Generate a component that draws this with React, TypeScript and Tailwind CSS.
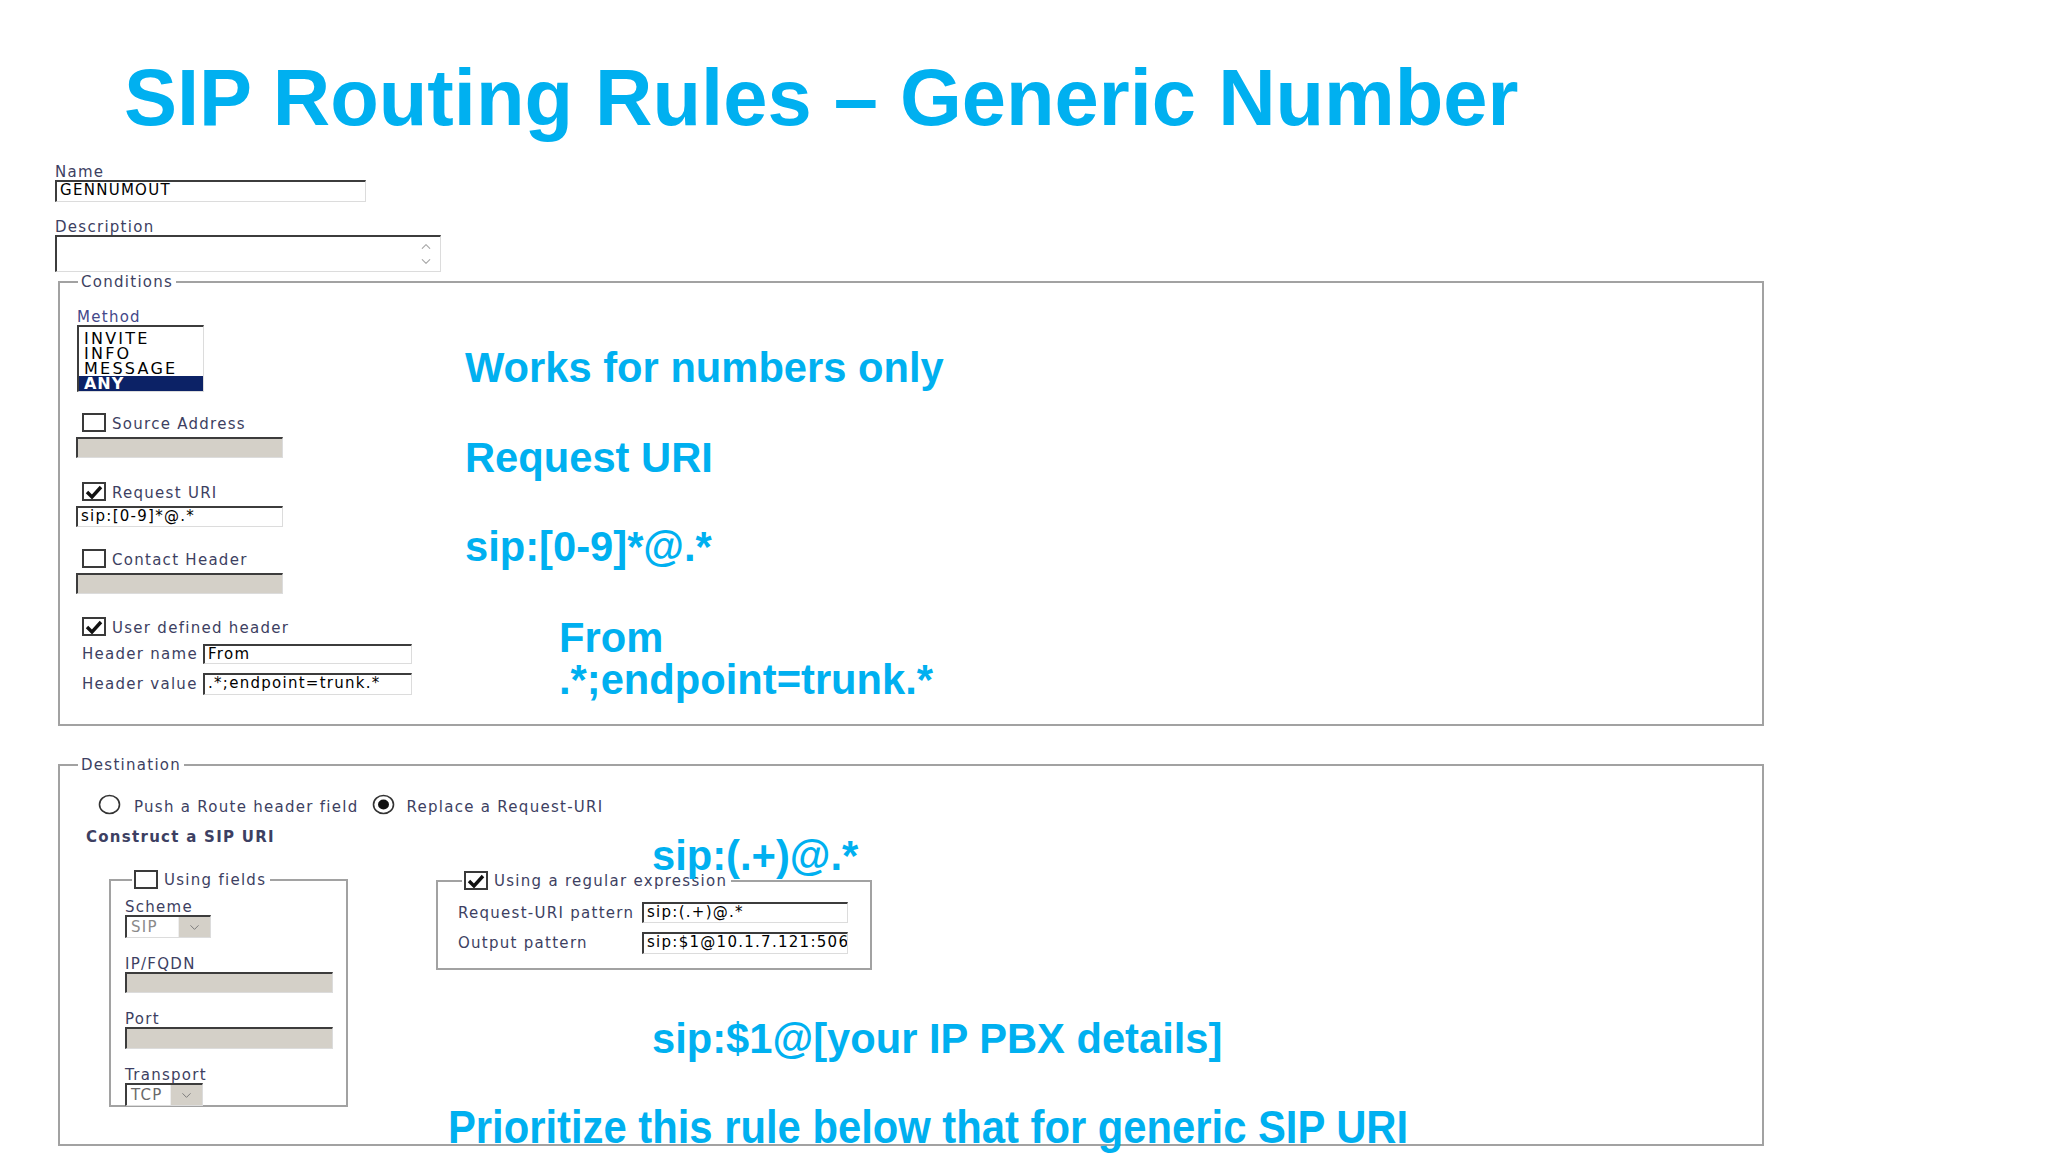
import { ChevronDown, ChevronUp } from "lucide-react";

const inset =
  "border-t-2 border-l-2 border-b border-r border-t-[#3c3c3c] border-l-[#3c3c3c] border-b-[#dcdcdc] border-r-[#dcdcdc]";

const label = "text-[15px] leading-[16px] tracking-[0.085em] text-[#3d3f62]";

function Field({
  className = "",
  value,
  disabled,
}: {
  className?: string;
  value?: string;
  disabled?: boolean;
}) {
  return (
    <div
      className={`${inset} ${
        disabled ? "bg-[#d4d0c8]" : "bg-white"
      } ${className} overflow-hidden whitespace-nowrap pl-[3px] text-[15px] leading-[17px] tracking-[0.085em] text-black`}
    >
      {value}
    </div>
  );
}

function Check({ checked }: { checked?: boolean }) {
  return (
    <span className="w-[24px] h-[19px] border-2 border-[#3a3a3a] bg-white flex items-center justify-center shrink-0">
      {checked && (
        <svg width="18" height="14" viewBox="0 0 18 14">
          <path
            d="M2 7 L7 12 L16 2"
            fill="none"
            stroke="#111"
            strokeWidth="3.4"
            strokeLinejoin="miter"
          />
        </svg>
      )}
    </span>
  );
}

function Radio({ on }: { on?: boolean }) {
  return (
    <svg width="23" height="21" viewBox="0 0 23 21" className="shrink-0">
      <ellipse cx="11.5" cy="10.5" rx="10" ry="9" fill="#fff" stroke="#333" strokeWidth="1.6" />
      {on && <ellipse cx="11.5" cy="10.5" rx="5.5" ry="5" fill="#111" />}
    </svg>
  );
}

function Select({ className, value, dim }: { className: string; value: string; dim?: boolean }) {
  return (
    <div className={`${inset} ${className} flex bg-white`}>
      <span
        className={`flex-1 pl-[4px] text-[15px] leading-[20px] tracking-[0.085em] ${
          dim ? "text-[#8a8a8a]" : "text-[#6a6a6a]"
        }`}
      >
        {value}
      </span>
      <span className="w-[32px] bg-[#d4d0c8] border-l border-[#eeeeee] flex items-center justify-center">
        <ChevronDown className="w-[15px] h-[15px] text-[#7c7c7c]" strokeWidth={1.6} />
      </span>
    </div>
  );
}

const callout =
  "absolute font-['Liberation_Sans',Arial,sans-serif] font-bold text-[41.7px] leading-none text-[#00b0f0] whitespace-nowrap";

export default function App() {
  return (
    <div className="relative w-[2048px] h-[1153px] bg-white overflow-hidden font-['DejaVu_Sans',Verdana,sans-serif]">
      <h1 className="pl-[124px] pt-[58px] font-['Liberation_Sans',Arial,sans-serif] font-bold text-[79.5px] leading-[80px] text-[#00b0f0] whitespace-nowrap">
        SIP Routing Rules – Generic Number
      </h1>

      <div className="pl-[55px] pt-[26px]">
        <div className={label}>Name</div>
        <Field className="w-[311px] h-[22px]" value="GENNUMOUT" />

        <div className={`${label} mt-[17px]`}>Description</div>
        <div className={`${inset} bg-white w-[386px] h-[37px] flex justify-end pr-[5px]`}>
          <div className="flex flex-col items-center justify-center text-[#a8a8a8]">
            <ChevronUp className="w-[18px] h-[15px]" strokeWidth={1.8} />
            <ChevronDown className="w-[18px] h-[15px]" strokeWidth={1.8} />
          </div>
        </div>

        {/* Conditions */}
        <fieldset className="ml-[3px] mt-[2px] w-[1706px] h-[452px] border-2 border-[#a2a2a2]">
          <legend className={`${label} ml-[18px] px-[3px]`}>Conditions</legend>
          <div className="pl-[17px] pt-[19px]">
            <div className={`${label} text-[#44488a]`}>Method</div>
            <div className={`${inset} w-[127px] h-[67px] bg-white pt-[4px] text-[16px] leading-[15px] text-black tracking-[0.14em]`}>
              <div className="pl-[5px]">INVITE</div>
              <div className="pl-[5px]">INFO</div>
              <div className="pl-[5px]">MESSAGE</div>
              <div className="pl-[5px] bg-[#0c2266] text-white font-bold tracking-[0.06em]">ANY</div>
            </div>

            <div className="mt-[21px] ml-[5px] flex items-end gap-[6px]">
              <Check />
              <span className={label}>Source Address</span>
            </div>
            <Field className="-ml-[1px] mt-[5px] w-[207px] h-[21px]" disabled />

            <div className="mt-[24px] ml-[5px] flex items-end gap-[6px]">
              <Check checked />
              <span className={label}>Request URI</span>
            </div>
            <Field className="-ml-[1px] mt-[5px] w-[207px] h-[21px]" value="sip:[0-9]*@.*" />

            <div className="mt-[22px] ml-[5px] flex items-end gap-[6px]">
              <Check />
              <span className={label}>Contact Header</span>
            </div>
            <Field className="-ml-[1px] mt-[5px] w-[207px] h-[21px]" disabled />

            <div className="mt-[23px] ml-[5px] flex items-end gap-[6px]">
              <Check checked />
              <span className={label}>User defined header</span>
            </div>
            <div className="mt-[8px] ml-[5px] flex items-center">
              <span className={`${label} w-[121px]`}>Header name</span>
              <Field className="w-[209px] h-[20px]" value="From" />
            </div>
            <div className="mt-[9px] ml-[5px] flex items-center">
              <span className={`${label} w-[121px]`}>Header value</span>
              <Field className="w-[209px] h-[22px]" value=".*;endpoint=trunk.*" />
            </div>
          </div>
        </fieldset>

        {/* Destination */}
        <fieldset className="ml-[3px] mt-[31px] w-[1706px] h-[389px] border-2 border-[#a2a2a2]">
          <legend className={`${label} ml-[18px] px-[3px]`}>Destination</legend>
          <div className="pl-[38px] pt-[21px] flex items-center">
            <Radio />
            <span className={`${label} ml-[13px] mt-[4px] tracking-[0.075em]`}>Push a Route header field</span>
            <span className="ml-[13px]">
              <Radio on />
            </span>
            <span className={`${label} ml-[12px] mt-[4px] tracking-[0.075em]`}>Replace a Request-URI</span>
          </div>
          <div className={`${label} pl-[26px] mt-[14px] font-bold text-[#2c2c4c] tracking-[0.05em]`}>
            Construct a SIP URI
          </div>

          <div className="mt-[25px] pl-[49px] flex items-start">
            <fieldset className="w-[239px] h-[237px] border-2 border-[#a2a2a2]">
              <legend className="ml-[21px] pl-[2px] pr-[4px] flex items-center gap-[6px]">
                <Check />
                <span className={label}>Using fields</span>
              </legend>
              <div className="pl-[14px] pt-[10px]">
                <div className={`${label} text-[#3a3c80]`}>Scheme</div>
                <Select className="w-[86px] h-[23px]" value="SIP" dim />
                <div className={`${label} text-[#3a3c80] mt-[18px]`}>IP/FQDN</div>
                <Field className="w-[208px] h-[21px]" disabled />
                <div className={`${label} text-[#3a3c80] mt-[18px]`}>Port</div>
                <Field className="w-[208px] h-[22px]" disabled />
                <div className={`${label} text-[#3a3c80] mt-[18px]`}>Transport</div>
                <Select className="w-[78px] h-[23px]" value="TCP" />
              </div>
            </fieldset>

            <fieldset className="ml-[88px] mt-[1px] w-[436px] h-[99px] border-2 border-[#a2a2a2]">
              <legend className="ml-[24px] pl-[2px] pr-[4px] flex items-center gap-[6px]">
                <Check checked />
                <span className={label}>Using a regular expression</span>
              </legend>
              <div className="pl-[20px] pt-[12px]">
                <div className="flex items-center">
                  <span className={`${label} w-[184px]`}>Request-URI pattern</span>
                  <Field className="w-[206px] h-[21px]" value="sip:(.+)@.*" />
                </div>
                <div className="mt-[9px] flex items-center">
                  <span className={`${label} w-[184px]`}>Output pattern</span>
                  <Field className="w-[206px] h-[22px]" value="sip:$1@10.1.7.121:5060" />
                </div>
              </div>
            </fieldset>
          </div>
        </fieldset>
      </div>

      {/* callouts laid over the form */}
      <div className={`${callout} left-[465px] top-[347px]`}>Works for numbers only</div>
      <div className={`${callout} left-[465px] top-[437px]`}>Request URI</div>
      <div className={`${callout} left-[465px] top-[526px]`}>sip:[0-9]*@.*</div>
      <div className={`${callout} left-[559px] top-[617px] leading-[42px]`}>
        From
        <br />
        .*;endpoint=trunk.*
      </div>
      <div className={`${callout} left-[652px] top-[835px]`}>sip:(.+)@.*</div>
      <div className={`${callout} left-[652px] top-[1018px]`}>sip:$1@[your IP PBX details]</div>
      <div className={`${callout} left-[448px] top-[1104px] text-[46px] scale-x-[0.908] origin-left`}>
        Prioritize this rule below that for generic SIP URI
      </div>
    </div>
  );
}
